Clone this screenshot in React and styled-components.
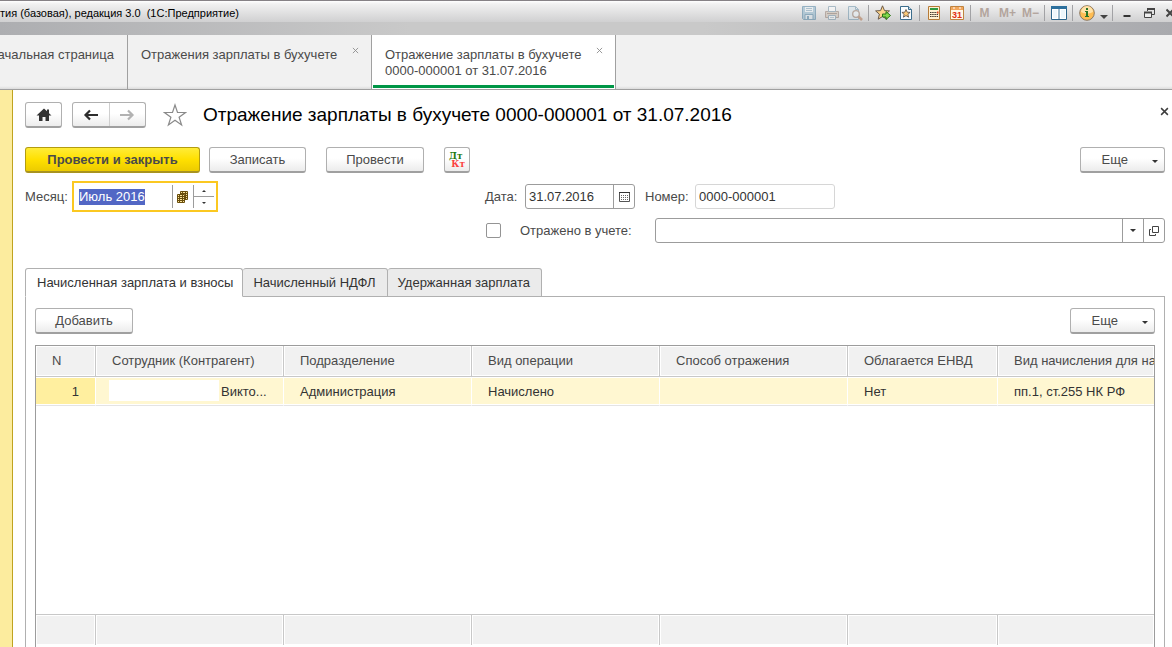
import React, { useEffect, useRef } from "react";
import styled, { createGlobalStyle } from "styled-components";

const GlobalStyle = createGlobalStyle`
    * {
        box-sizing: border-box;
    }
    body {
        margin: 0;
        overflow: hidden;
        background: #fff;
        color: #4a4a4a;
        font: 13px/16px "Liberation Sans", Arial, sans-serif;
    }
    button, input {
        font: inherit;
        color: inherit;
    }
    svg {
        display: block;
        flex: none;
    }
`;

const Window = styled.div`
    display: flex;
    flex-direction: column;
    height: 100vh;
    overflow: hidden;
`;

const TitleBar = styled.header`
    display: flex;
    align-items: center;
    justify-content: space-between;
    height: 22px;
    padding-top: 3px;
    border-top: 1px solid #868286;
    background: linear-gradient(#fff 0, #f1f1f1 3px, #d0d0d1 100%);
`;

const TitleText = styled.span`
    font-size: 11px;
    color: #000;
    white-space: pre;
`;

const TitleTools = styled.div`
    display: flex;
    align-items: center;
`;

const ToolButton = styled.button`
    display: flex;
    align-items: center;
    justify-content: ${props => props.$clip ? "flex-end" : "center"};
    width: ${props => props.$width || 23}px;
    height: 18px;
    padding: 0;
    border: 0;
    background: none;
    color: #b3a59d;
    font-size: 12px;
    font-weight: bold;
    opacity: ${props => props.$faded ? 0.45 : 1};
`;

const ToolSeparator = styled.span`
    width: 1px;
    height: 16px;
    margin: 0 2px;
    background: #a2a2a5;
`;

const Band = styled.div`
    height: 13px;
    background: linear-gradient(90deg, #adaeb1, #c9c9c9 35%, #c9c9c9 60%, #a9aaae);
`;

const WindowTabs = styled.nav`
    display: flex;
    height: 55px;
    background: linear-gradient(#f1f1f1 51px, #dcdcdc 54px);
    border-bottom: 1px solid #a0a0a0;
`;

const WindowTab = styled.div`
    display: flex;
    align-items: flex-start;
    justify-content: ${props => props.$first ? "flex-end" : "space-between"};
    width: ${props => props.$first ? 128 : 244}px;
    padding: ${props => props.$first ? "12px 13px 0 0" : "12px 12px 0 13px"};
    border-right: 1px solid #a0a0a0;
    ${props => props.$active && `
        background: linear-gradient(#009646, #009646) 1px 50px / calc(100% - 2px) 3px no-repeat #fff;
    `}
`;

const WindowTabLink = styled.a`
    color: #4a4a4a;
    text-decoration: none;
    white-space: pre;
`;

const CloseButton = styled.button`
    display: flex;
    padding: 0;
    border: 0;
    background: none;
    color: ${props => props.$dark ? "#3c3c3c" : "#8c8c8c"};
    ${props => props.$dark && "margin: 0 -4px 8px auto;"}
`;

const Body = styled.div`
    display: flex;
    flex: 1;
    min-height: 0;
`;

const SideStrip = styled.aside`
    width: 13px;
    background: #fcec9e;
    border-right: 1px solid #bfa320;
`;

const Main = styled.main`
    display: flex;
    flex-direction: column;
    flex: 1;
    min-width: 0;
    padding: 12px 7px 0 12px;
`;

const Row = styled.div`
    display: flex;
    align-items: center;
`;

const NavRow = styled(Row)`
    height: 26px;
    margin-bottom: 19px;
`;

const CommandRow = styled(Row)`
    margin-bottom: 8px;
`;

const Title = styled.h1`
    margin: 0 0 0 16px;
    font-size: 19px;
    line-height: 26px;
    font-weight: normal;
    color: #000;
    white-space: nowrap;
`;

const Button = styled.button`
    display: flex;
    align-items: center;
    justify-content: center;
    width: ${props => props.$width}px;
    height: 26px;
    margin-right: ${props => props.$gap || 0}px;
    padding: 0;
    border: 1px solid ${props => props.$primary ? "#b39c10" : "#b0b0b0"};
    border-bottom: 2px solid ${props => props.$primary ? "#a89320" : "#a0a0a0"};
    border-radius: 3px;
    background: ${props => props.$primary
        ? "linear-gradient(#ffec38, #ffe000 50%, #eccb00)"
        : "linear-gradient(#fff 45%, #ececec)"};
    font-weight: ${props => props.$primary ? "bold" : "normal"};
`;

const MoreButton = styled(Button)`
    justify-content: flex-end;
    width: 85px;
    margin-left: auto;
    padding-right: 6px;
    gap: 24px;
    svg {
        margin-top: 3px;
    }
`;

const ButtonGroup = styled.div`
    display: flex;
    width: 74px;
    height: 26px;
    margin: 0 17px 0 10px;
    border: 1px solid #b0b0b0;
    border-bottom: 2px solid #a0a0a0;
    border-radius: 3px;
    background: linear-gradient(#fff 45%, #ececec);
`;

const GroupButton = styled.button`
    display: flex;
    flex: 1;
    align-items: center;
    justify-content: center;
    padding: 0;
    border: 0;
    background: none;
    & + & {
        border-left: 1px solid #cfcfcf;
    }
`;

const IconButton = styled.button`
    display: flex;
    padding: 0;
    border: 0;
    background: none;
`;

const Posting = styled.span`
    display: flex;
    flex-direction: column;
    width: 16px;
    font: bold 9px/8px "DejaVu Serif", serif;
    text-align: left;
`;

const Debit = styled.span`
    color: #1f7a10;
`;

const Credit = styled.span`
    color: #fb4040;
    text-align: right;
`;

const Form = styled.form`
    display: grid;
    grid-template-columns: 460px 1fr;
    align-items: start;
    margin-bottom: 25px;
`;

const FormSide = styled.div`
    display: flex;
    flex-direction: column;
    gap: 9px;
    padding-top: 3px;
`;

const Label = styled.label`
    width: ${props => props.$width}px;
    white-space: nowrap;
`;

const Field = styled.div`
    display: flex;
    width: ${props => props.$width ? `${props.$width}px` : "auto"};
    flex: ${props => props.$width ? "none" : 1};
    height: 25px;
    margin-right: ${props => props.$gap || 0}px;
    border: 1px solid ${props => props.$light ? "#d6d6d6" : "#9c9c9c"};
    border-radius: 3px;
    background: #fff;
`;

const MonthField = styled.div`
    display: flex;
    width: 146px;
    height: 31px;
    padding: 2px;
    border: 2px solid #fbc821;
`;

const Input = styled.input`
    flex: 1;
    min-width: 0;
    padding: ${props => props.$month ? "0 0 0 3px" : "0 3px"};
    border: 0;
    outline: 0;
    background: none;
    color: #333;
    &::selection {
        color: #fff;
        background: rgba(80, 101, 196, 0.99);
    }
`;

const FieldButton = styled.button`
    display: flex;
    align-items: center;
    justify-content: center;
    width: 21px;
    padding: 0;
    border: 0;
    border-left: 1px solid #9c9c9c;
    background: none;
`;

const Spinner = styled.div`
    display: flex;
    flex-direction: column;
    width: 21px;
    border-left: 1px solid #9c9c9c;
`;

const SpinButton = styled.button`
    display: flex;
    flex: 1;
    align-items: center;
    justify-content: center;
    padding: 0;
    border: 0;
    background: none;
    & + & {
        border-top: 1px solid #9c9c9c;
    }
`;

const Checkbox = styled.input`
    appearance: none;
    width: 15px;
    height: 15px;
    margin: 0 19px 0 1px;
    border: 1px solid #949494;
    border-radius: 2px;
    background: #fff;
`;

const Tabs = styled.div`
    display: flex;
    height: 29px;
    margin-bottom: -1px;
    z-index: 1;
`;

const Tab = styled.button`
    padding: ${props => props.$active ? "0 9px 0 11px" : "0 11px 0 10px"};
    border: 1px solid #b0b0b0;
    border-left-width: ${props => props.$active ? 1 : 0}px;
    border-bottom-color: ${props => props.$active ? "#fff" : "#b0b0b0"};
    border-radius: 3px 3px 0 0;
    background: ${props => props.$active ? "#fff" : "#ebebeb"};
    color: #333;
    white-space: nowrap;
`;

const Panel = styled.section`
    display: flex;
    flex-direction: column;
    flex: 1;
    min-height: 0;
    padding: 11px 9px 0;
    border: 1px solid #b0b0b0;
    border-bottom: 0;
`;

const TableBox = styled.div`
    flex: 1;
    min-height: 0;
    margin-top: 11px;
    padding-bottom: 2px;
    overflow: hidden;
    border: 1px solid #9c9c9c;
    border-bottom: 0;
`;

const Table = styled.table`
    width: 100%;
    height: 100%;
    table-layout: fixed;
    border-collapse: separate;
    border-spacing: 0;
`;

const Col = styled.col`
    width: ${props => props.$width ? `${props.$width}px` : "auto"};
`;

const HeadCell = styled.th`
    height: 31px;
    padding: 0 0 0 16px;
    overflow: hidden;
    border-right: 1px solid #c8c8c8;
    border-bottom: 1px solid #c8c8c8;
    background: #f1f1f1;
    box-shadow: inset 0 0 0 1px #fff;
    font-weight: normal;
    text-align: left;
    white-space: nowrap;
    &:last-child {
        border-right: 0;
    }
`;

const Cell = styled.td`
    height: 29px;
    padding: ${props => props.$number ? "2px 16px 0 0" : props.$masked ? "2px 0 0 13px" : "2px 0 0 16px"};
    overflow: hidden;
    border-right: 1px solid #fff;
    border-bottom: 1px solid #e4e4e4;
    background: ${props => props.$number ? "#ffef9f" : "#fff7d1"};
    box-shadow: inset 0 1px #fff, inset 0 -1px #fff;
    color: #333;
    text-align: ${props => props.$number ? "right" : "left"};
    white-space: nowrap;
    &:last-child {
        border-right: 0;
    }
`;

const Person = styled.div`
    display: flex;
    align-items: center;
    gap: 2px;
`;

const Mask = styled.span`
    width: 110px;
    height: 21px;
    margin-bottom: 4px;
    background: #fff;
`;

const EmptyCell = styled.td`
    padding: 0;
`;

const FootCell = styled.td`
    height: 31px;
    padding: 0;
    border-top: 1px solid #c8c8c8;
    border-right: 1px solid #c8c8c8;
    background: #f1f1f1;
    box-shadow: inset 0 0 0 1px #fff;
    &:last-child {
        border-right: 0;
    }
`;

const columns = [
    { title: "N", width: 60 },
    { title: "Сотрудник (Контрагент)", width: 188 },
    { title: "Подразделение", width: 188 },
    { title: "Вид операции", width: 188 },
    { title: "Способ отражения", width: 188 },
    { title: "Облагается ЕНВД", width: 150 },
    { title: "Вид начисления для на" }
];

const SaveIcon = () => (
    <svg width="16" height="16" viewBox="0 0 16 16">
        <path d="M1.5 1.5h13v13h-12l-1-1z" fill="#7aa9c4" stroke="#2d6b91" />
        <path d="M4 2h8v5H4z" fill="#e8f1f6" />
        <path d="M5 3.5h6M5 5.5h6" stroke="#6592ad" />
        <path d="M4 9.500h8v5H4z" fill="#d6e4ec" stroke="#2d6b91" />
        <path d="M6 11h2v3H6z" fill="#2d6b91" />
    </svg>
);

const PrintIcon = () => (
    <svg width="16" height="16" viewBox="0 0 16 16">
        <path d="M1.500 6.500h13v6h-13z" fill="#c6b5a4" stroke="#83695a" />
        <path d="M4.500 1.500h7v5h-7z" fill="#fff" stroke="#587f96" />
        <path d="M3 8.500h10" stroke="#725a4b" />
        <path d="M4.500 10.500h7v4h-7z" fill="#f2f5f7" stroke="#587f96" />
        <path d="M6 12.500h4" stroke="#8fa9b8" />
    </svg>
);

const PreviewIcon = () => (
    <svg width="16" height="16" viewBox="0 0 16 16">
        <path d="M1.500 1.500h7l3 3v10h-10z" fill="#d3e3ec" stroke="#4f7f9b" />
        <path d="M8.500 1.500v3h3" fill="none" stroke="#4f7f9b" />
        <path d="M11 11l4 4" stroke="#a85f30" strokeWidth="2.500" />
        <circle cx="9" cy="9" r="3.300" fill="#e9f4fa" stroke="#805f4b" strokeWidth="1.300" />
    </svg>
);

const AddFavoriteIcon = () => (
    <svg width="16" height="16" viewBox="0 0 16 16">
        <path d="M7.500.8l2 4.800 5 .3-3.900 3.300 1.300 5-4.400-2.700-4.300 2.700 1.200-5L.6 5.900l5-.3z" fill="#fdd58c" stroke="#6b5a49" />
        <path d="M7.500 9h3.500V6.500l4.500 4-4.500 4V12H7.500z" fill="#84d94b" stroke="#277516" />
    </svg>
);

const FavoritesIcon = () => (
    <svg width="14" height="16" viewBox="0 0 14 16">
        <path d="M1.500 1.500h8l3 3v10h-11z" fill="#fafdff" stroke="#3b6d8c" />
        <path d="M9.500 1.500v3h3" fill="#c7dce8" stroke="#3b6d8c" />
        <path d="M7 4.500l1.200 2.700 2.900.2-2.200 1.900.7 2.900L7 10.600l-2.600 1.600.7-2.900-2.200-1.900 2.900-.2z" fill="#fdcb78" stroke="#55483c" strokeWidth=".8" />
    </svg>
);

const CalculatorIcon = () => (
    <svg width="14" height="16" viewBox="0 0 14 16">
        <path d="M1.500 1.500h11v13h-11z" fill="#fff0d2" stroke="#b77b38" />
        <path d="M3 3h8v2H3z" fill="#2f9a42" />
        <path d="M3 7.500h8M3 9.500h8M3 11.500h8" stroke="#40362c" strokeDasharray="1.500 .7" />
        <path d="M10 6.500h1.500v2H10z" fill="#df3a1d" />
    </svg>
);

const CalendarIcon = () => (
    <svg width="14" height="16" viewBox="0 0 14 16">
        <path d="M.5 1.500h13v13H.5z" fill="#fff8e8" stroke="#bf833f" />
        <path d="M1 2h12v3H1z" fill="#f3a75c" />
        <path d="M3 3h2M9 3h2" stroke="#fff" />
        <text x="7" y="13" textAnchor="middle" fontSize="9" fontWeight="bold" fontFamily="Liberation Sans, sans-serif" fill="#e12f12">31</text>
    </svg>
);

const PanelsIcon = () => (
    <svg width="16" height="16" viewBox="0 0 16 16">
        <path d="M.5 1.500h15v13H.5z" fill="#fff" stroke="#2c668c" />
        <path d="M0 1h16v3H0z" fill="#2d709d" />
        <path d="M8 4v10" stroke="#9bb9cc" strokeWidth="2" />
        <path d="M2 5h4v8H2zM10 5h4v8h-4z" fill="#edf7fc" />
    </svg>
);

const InfoIcon = () => (
    <svg width="16" height="16" viewBox="0 0 16 16">
        <circle cx="8" cy="8" r="7.300" fill="#ffbd54" stroke="#8c7962" />
        <path d="M2 7a6 6 0 0 1 12 0q-6 3-12 0z" fill="#ffe2a8" />
        <path d="M7 3h2v2H7zM6 6h3v5h1v1H6v-1h1V7H6z" fill="#287528" />
    </svg>
);

const MinimizeIcon = () => (
    <svg width="8" height="12" viewBox="0 0 8 12"><path d="M.5 8h7v2h-7z" fill="#333" /></svg>
);

const RestoreIcon = () => (
    <svg width="12" height="12" viewBox="0 0 12 12">
        <path d="M3.500 4V1.500h7v6H8" fill="none" stroke="#444" />
        <path d="M3 2h8" stroke="#444" strokeWidth="2" />
        <path d="M.5 5.500h7v5h-7z" fill="#eee" stroke="#444" />
        <path d="M0 5.500h8" stroke="#444" strokeWidth="2" />
    </svg>
);

const WindowCloseIcon = () => (
    <svg width="6" height="10" viewBox="0 0 6 10"><path d="M.5 1.500l7 7M7.500 1.500l-7 7" stroke="#444" strokeWidth="2" /></svg>
);

const CrossIcon = ({ size }) => (
    <svg width={size} height={size} viewBox="0 0 8 8">
        <path d="M1 1l6 6M7 1L1 7" stroke="currentColor" strokeWidth={size > 7 ? 1.3 : 1} />
    </svg>
);

const HomeIcon = () => (
    <svg width="16" height="14" viewBox="0 0 16 14">
        <path d="M8 .5L.5 7.500H3V13h3.500V9h3v4H13V7.500h2.500L13 5.200V1.500h-2v1.800z" fill="#333" />
    </svg>
);

const ArrowIcon = ({ right }) => (
    <svg width="16" height="14" viewBox="0 0 16 14">
        <path
            d={right ? "M1 7h12M9 2.500L13.500 7 9 11.500" : "M15 7H3M7 2.500L2.500 7 7 11.500"}
            fill="none"
            stroke={right ? "#b2b2b2" : "#2c2c2c"}
            strokeWidth="2.200"
        />
    </svg>
);

const StarIcon = () => (
    <svg width="24" height="24" viewBox="0 0 24 24">
        <path d="M12 2l2.500 7.500h8l-6.400 4.800 2.500 7.700-6.600-4.800L5.400 22l2.500-7.700-6.400-4.800h8z" fill="#fff" stroke="#8a8a8a" strokeWidth="1.200" />
    </svg>
);

const CaretIcon = ({ up, small }) => (
    <svg width={small ? 4 : 6} height={small ? 2 : 3} viewBox={small ? "0 0 4 2" : "0 0 6 3"}>
        <path d={small ? (up ? "M0 2h4L2 0z" : "M0 0h4L2 2z") : "M0 0h6L3 3z"} fill="#333" />
    </svg>
);

const ChoiceIcon = () => (
    <svg width="12" height="12" viewBox="0 0 12 12">
        <path d="M3.500.5h7v8h-7z" fill="#fbe39a" stroke="#6a4e0c" />
        <path d="M3 2.500h8M3 4.500h8M3 6.500h8M5.500.5v8M8.500.5v8" stroke="#6a4e0c" />
        <path d="M.5 3.500h7v8h-7z" fill="#fbe39a" stroke="#6a4e0c" />
        <path d="M0 5.500h8M0 7.500h8M0 9.500h8M2.500 3v9M5.500 3v9" stroke="#6a4e0c" />
    </svg>
);

const DateIcon = () => (
    <svg width="11" height="10" viewBox="0 0 11 10">
        <path d="M.5.5h10v9H.5z" fill="#fff" stroke="#555" />
        <path d="M0 .5h11" stroke="#333" />
        <path d="M2 3.500h7M2 5.500h7M2 7.500h7" stroke="#666" strokeDasharray="1 1" />
    </svg>
);

const OpenIcon = () => (
    <svg width="10" height="10" viewBox="0 0 10 10">
        <path d="M3.500.5h6v6h-6z" fill="none" stroke="#444" />
        <path d="M2 3.500H.5v6h6V8" fill="none" stroke="#444" />
    </svg>
);

const More = () => (
    <MoreButton type="button">Еще <CaretIcon /></MoreButton>
);

const SystemBar = () => (
    <TitleBar>
        <TitleText>тия (базовая), редакция 3.0  (1С:Предприятие)</TitleText>
        <TitleTools>
            <ToolButton $faded aria-label="Сохранить"><SaveIcon /></ToolButton>
            <ToolButton $faded aria-label="Печать"><PrintIcon /></ToolButton>
            <ToolButton $faded aria-label="Просмотр"><PreviewIcon /></ToolButton>
            <ToolSeparator />
            <ToolButton aria-label="Добавить в избранное"><AddFavoriteIcon /></ToolButton>
            <ToolButton aria-label="Избранное"><FavoritesIcon /></ToolButton>
            <ToolSeparator />
            <ToolButton aria-label="Калькулятор"><CalculatorIcon /></ToolButton>
            <ToolButton aria-label="Календарь"><CalendarIcon /></ToolButton>
            <ToolSeparator />
            <ToolButton>M</ToolButton>
            <ToolButton>M+</ToolButton>
            <ToolButton>M−</ToolButton>
            <ToolSeparator />
            <ToolButton aria-label="Панели"><PanelsIcon /></ToolButton>
            <ToolSeparator />
            <ToolButton aria-label="Справка"><InfoIcon /></ToolButton>
            <ToolButton $width={12} aria-label="Меню">
                <svg width="8" height="12" viewBox="0 0 8 12"><path d="M0 8h8l-4 4z" fill="#444" /></svg>
            </ToolButton>
            <ToolSeparator />
            <ToolButton aria-label="Свернуть"><MinimizeIcon /></ToolButton>
            <ToolButton aria-label="Восстановить"><RestoreIcon /></ToolButton>
            <ToolButton $width={11} $clip aria-label="Закрыть окно"><WindowCloseIcon /></ToolButton>
        </TitleTools>
    </TitleBar>
);

const EntriesTable = () => (
    <TableBox>
        <Table>
            <colgroup>
                {columns.map(column => <Col key={column.title} $width={column.width} />)}
            </colgroup>
            <thead>
                <tr>
                    {columns.map(column => <HeadCell key={column.title}>{column.title}</HeadCell>)}
                </tr>
            </thead>
            <tbody>
                <tr>
                    <Cell $number>1</Cell>
                    <Cell $masked><Person><Mask />Викто...</Person></Cell>
                    <Cell>Администрация</Cell>
                    <Cell>Начислено</Cell>
                    <Cell />
                    <Cell>Нет</Cell>
                    <Cell>пп.1, ст.255 НК РФ</Cell>
                </tr>
                <tr>
                    <EmptyCell colSpan={columns.length} />
                </tr>
            </tbody>
            <tfoot>
                <tr>
                    {columns.map(column => <FootCell key={column.title} />)}
                </tr>
            </tfoot>
        </Table>
    </TableBox>
);

const App = () => {
    const monthRef = useRef(null);

    useEffect(() => {
        monthRef.current.focus();
        monthRef.current.select();
    }, []);

    return (
        <Window>
            <GlobalStyle />
            <SystemBar />
            <Band />
            <WindowTabs>
                <WindowTab $first>
                    <WindowTabLink href="#home">ачальная страница</WindowTabLink>
                </WindowTab>
                <WindowTab>
                    <WindowTabLink href="#list">Отражения зарплаты в бухучете</WindowTabLink>
                    <CloseButton aria-label="Закрыть"><CrossIcon size={7} /></CloseButton>
                </WindowTab>
                <WindowTab $active>
                    <WindowTabLink href="#document">{"Отражение зарплаты в бухучете\n0000-000001 от 31.07.2016"}</WindowTabLink>
                    <CloseButton aria-label="Закрыть"><CrossIcon size={7} /></CloseButton>
                </WindowTab>
            </WindowTabs>
            <Body>
                <SideStrip />
                <Main>
                    <NavRow>
                        <Button $width={37} aria-label="Домой"><HomeIcon /></Button>
                        <ButtonGroup>
                            <GroupButton aria-label="Назад"><ArrowIcon /></GroupButton>
                            <GroupButton aria-label="Вперед"><ArrowIcon right /></GroupButton>
                        </ButtonGroup>
                        <IconButton aria-label="В избранное"><StarIcon /></IconButton>
                        <Title>Отражение зарплаты в бухучете 0000-000001 от 31.07.2016</Title>
                        <CloseButton $dark aria-label="Закрыть документ"><CrossIcon size={9} /></CloseButton>
                    </NavRow>
                    <CommandRow>
                        <Button $primary $width={175} $gap={9}>Провести и закрыть</Button>
                        <Button $width={97} $gap={20}>Записать</Button>
                        <Button $width={98} $gap={20}>Провести</Button>
                        <Button $width={26}>
                            <Posting><Debit>Дт</Debit><Credit>Кт</Credit></Posting>
                        </Button>
                        <More />
                    </CommandRow>
                    <Form>
                        <Row>
                            <Label $width={47} htmlFor="month">Месяц:</Label>
                            <MonthField>
                                <Input $month id="month" ref={monthRef} defaultValue="Июль 2016" />
                                <FieldButton type="button" aria-label="Выбрать месяц"><ChoiceIcon /></FieldButton>
                                <Spinner>
                                    <SpinButton type="button" aria-label="Следующий месяц"><CaretIcon up small /></SpinButton>
                                    <SpinButton type="button" aria-label="Предыдущий месяц"><CaretIcon small /></SpinButton>
                                </Spinner>
                            </MonthField>
                        </Row>
                        <FormSide>
                            <Row>
                                <Label $width={40} htmlFor="date">Дата:</Label>
                                <Field $width={110} $gap={10}>
                                    <Input id="date" defaultValue="31.07.2016" />
                                    <FieldButton type="button" aria-label="Выбрать дату"><DateIcon /></FieldButton>
                                </Field>
                                <Label $width={50} htmlFor="number">Номер:</Label>
                                <Field $width={140} $light>
                                    <Input id="number" defaultValue="0000-000001" />
                                </Field>
                            </Row>
                            <Row>
                                <Checkbox type="checkbox" id="reflected" />
                                <Label $width={135} htmlFor="reflected">Отражено в учете:</Label>
                                <Field>
                                    <Input aria-label="Отражено в учете" />
                                    <FieldButton type="button" aria-label="Выбрать"><CaretIcon /></FieldButton>
                                    <FieldButton type="button" aria-label="Открыть"><OpenIcon /></FieldButton>
                                </Field>
                            </Row>
                        </FormSide>
                    </Form>
                    <Tabs role="tablist">
                        <Tab role="tab" aria-selected="true" $active>Начисленная зарплата и взносы</Tab>
                        <Tab role="tab" aria-selected="false">Начисленный НДФЛ</Tab>
                        <Tab role="tab" aria-selected="false">Удержанная зарплата</Tab>
                    </Tabs>
                    <Panel>
                        <Row>
                            <Button $width={98}>Добавить</Button>
                            <More />
                        </Row>
                        <EntriesTable />
                    </Panel>
                </Main>
            </Body>
        </Window>
    );
};

export default App;
